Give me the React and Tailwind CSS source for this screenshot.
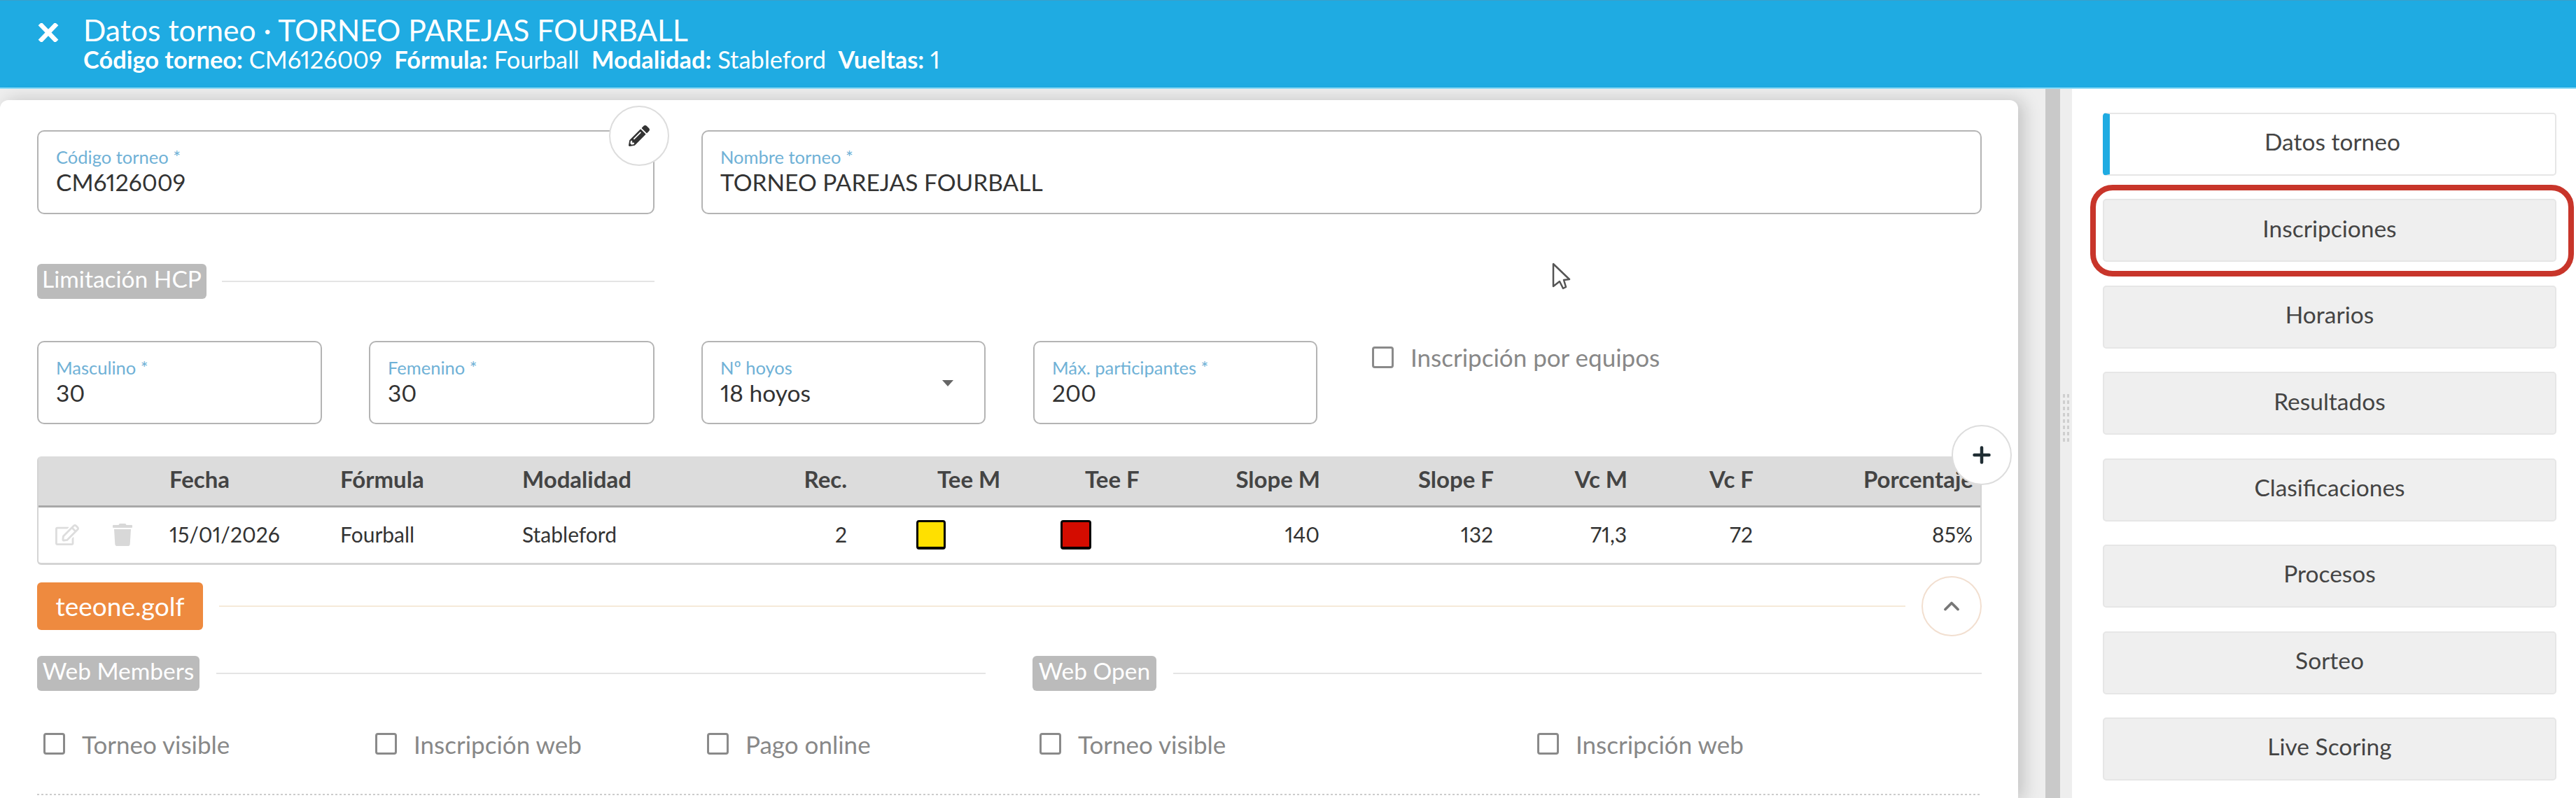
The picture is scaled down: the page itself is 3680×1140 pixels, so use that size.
import React from 'react';
import { Plus, ChevronUp } from 'lucide-react';
import { FaPencilAlt, FaRegEdit, FaTrash } from 'react-icons/fa';

const font = "font-['Lato','Liberation_Sans',sans-serif]";

// Floating-label box used by every form field
const Field = ({ label, value, className, arrow }) => (
  <div className={`relative h-full rounded-[10px] border-2 border-[#b4b4b4] bg-white pl-[25px] pt-[22px] ${className || ''}`}>
    <div className="text-[25.5px] leading-[28px] text-[#6fb1d6]">{label}</div>
    <div className="mt-[1px] text-[33.5px] leading-[42px] text-[#333]">{value}</div>
    {arrow && (
      <svg className="absolute right-[42px] top-[54px]" width="20" height="10" viewBox="0 0 20 10">
        <path d="M2 0 L18 0 L10 9 Z" fill="#666" />
      </svg>
    )}
  </div>
);

const Badge = ({ children, className }) => (
  <div className={`flex h-[50px] shrink-0 items-center justify-center rounded-[6px] bg-[#bbbbbb] pb-[7px] text-[33.5px] text-white ${className || ''}`}>
    {children}
  </div>
);

const Check = ({ label, className }) => (
  <label className={`flex items-center ${className || ''}`}>
    <span className="h-[31px] w-[31px] rounded-[4px] border-[3px] border-[#8a8a8a] bg-white"></span>
    <span className="ml-[24px] text-[35px] leading-[40px] text-[#888]">{label}</span>
  </label>
);

const RoundButton = ({ children, className }) => (
  <div className={`flex h-[86px] w-[86px] items-center justify-center rounded-full border-2 bg-white ${className || ''}`}>
    {children}
  </div>
);

const menu = ['Datos torneo', 'Inscripciones', 'Horarios', 'Resultados', 'Clasificaciones', 'Procesos', 'Sorteo', 'Live Scoring'];

const columns = [
  ['Fecha', 'w-[244px] text-left', '15/01/2026'],
  ['Fórmula', 'w-[260px] text-left', 'Fourball'],
  ['Modalidad', 'w-[300px] text-left', 'Stableford'],
  ['Rec.', 'w-[164px] text-right', '2'],
];

const rightColumns = [
  ['Slope M', 'w-[258px]', '140'],
  ['Slope F', 'w-[248px]', '132'],
  ['Vc M', 'w-[191px]', '71,3'],
  ['Vc F', 'w-[180px]', '72'],
  ['Porcentaje', 'w-[314px]', '85%'],
];

export default function App() {
  return (
    <div className={`h-[1140px] w-[3680px] overflow-hidden bg-[#eeeeee] proportional-nums ${font}`}>
      <header className="flex h-[127px] items-start border-b-2 border-t border-b-[#8fdcf7] border-t-[#3a9fc9] bg-[#1fabe2] text-white">
        <svg className="ml-[54px] mt-[32px] shrink-0" width="30" height="27" viewBox="0 0 30 27">
          <path d="M3 1 L27 26 M27 1 L3 26" stroke="#ffffff" strokeWidth="6.5" fill="none" />
        </svg>
        <div className="ml-[35px] pt-[19px]">
          <div className="text-[42.6px] leading-[46px]">Datos torneo · TORNEO PAREJAS FOURBALL</div>
          <div className="text-[34.4px] leading-[38px]">
            <b>Código torneo:</b> CM6126009 &nbsp;<b>Fórmula:</b> Fourball &nbsp;<b>Modalidad:</b> Stableford &nbsp;<b>Vueltas:</b> 1
          </div>
        </div>
      </header>

      <div className="flex h-[1013px]">
        {/* left content */}
        <div className="w-[2922px] shrink-0 pt-[16px]">
          <main className="relative h-[1000px] w-[2883px] rounded-tr-[12px] rounded-tl-[12px] bg-white pl-[53px] pr-[52px] pt-[43px] shadow-[8px_0_24px_rgba(0,0,0,0.18)]">
            <div className="flex h-[120px] gap-[67px]">
              <Field className="w-[882px]" label="Código torneo *" value="CM6126009" />
              <Field className="flex-1" label="Nombre torneo *" value="TORNEO PAREJAS FOURBALL" />
            </div>
            <RoundButton className="absolute left-[870px] top-[8px] border-[#dddddd]">
              <FaPencilAlt size={30} color="#333" />
            </RoundButton>

            <div className="mt-[71px] flex w-[882px] items-center">
              <Badge className="w-[242px]">Limitación HCP</Badge>
              <div className="ml-[22px] h-[2px] flex-1 bg-[#e4e4e4]"></div>
            </div>

            <div className="mt-[60px] flex h-[119px]">
              <Field className="w-[407px]" label="Masculino *" value="30" />
              <Field className="ml-[67px] w-[408px]" label="Femenino *" value="30" />
              <Field className="ml-[67px] w-[406px]" label="Nº hoyos" value="18 hoyos" arrow />
              <Field className="ml-[68px] w-[406px]" label="Máx. participantes *" value="200" />
              <Check className="ml-[78px] h-[46px]" label="Inscripción por equipos" />
            </div>

            {/* tees table */}
            <div className="mt-[46px] w-[2778px] overflow-hidden rounded-[6px] border-x-2 border-b-[3px] border-[#d4d4d4] text-[30px] text-[#333]">
              <div className="flex h-[73px] items-center border-b-[3px] border-[#a8a8a8] bg-[#dcdcdc] pb-[4px] text-[33px] font-bold text-[#444]">
                <div className="w-[187px]"></div>
                {columns.map(([name, cls]) => <div key={name} className={cls}>{name}</div>)}
                <div className="ml-[129px] w-[86px] whitespace-nowrap">Tee M</div>
                <div className="ml-[125px] w-[78px] whitespace-nowrap">Tee F</div>
                {rightColumns.map(([name, cls]) => <div key={name} className={`${cls} text-right`}>{name}</div>)}
              </div>
              <div className="flex h-[79px] items-center pb-[2px]">
                <div className="flex w-[187px] items-center pl-[24px]">
                  <FaRegEdit size={34} color="#dddddd" />
                  <FaTrash className="ml-[46px]" size={32} color="#d8d8d8" />
                </div>
                {columns.map(([name, cls, val]) => <div key={name} className={cls}>{val}</div>)}
                <div className="ml-[99px] h-[42px] w-[42px] rounded-[4px] border-[3px] border-b-[4px] border-black bg-[#ffe000]"></div>
                <div className="ml-[164px] h-[42px] w-[44px] rounded-[4px] border-[3px] border-b-[4px] border-black bg-[#d40c00]"></div>
                {rightColumns.map(([name, cls, val], i) => (
                  <div key={name} className={`${cls} text-right ${i === 0 ? 'ml-[68px]' : ''}`}>{val}</div>
                ))}
              </div>
            </div>
            <RoundButton className="absolute left-[2788px] top-[464px] border-[#dddddd]">
              <Plus size={36} stroke="#1f2d33" strokeWidth={3} />
            </RoundButton>

            <div className="mt-[25px] flex h-[68px] w-[2778px] items-center">
              <div className="flex h-[68px] w-[237px] shrink-0 items-center justify-center rounded-[6px] bg-[#ee8a3f] text-[37px] text-white">teeone.golf</div>
              <div className="ml-[23px] h-[2px] w-[2410px] bg-[#f5ead9]"></div>
              <RoundButton className="ml-[23px] shrink-0 border-[#f2dfd0]">
                <ChevronUp size={36} stroke="#777" strokeWidth={2.5} />
              </RoundButton>
            </div>

            <div className="mt-[37px] flex w-[2778px]">
              <div className="flex w-[1355px] items-center">
                <Badge className="w-[232px]">Web Members</Badge>
                <div className="ml-[24px] h-[2px] flex-1 bg-[#e4e4e4]"></div>
              </div>
              <div className="ml-[67px] flex flex-1 items-center">
                <Badge className="w-[177px]">Web Open</Badge>
                <div className="ml-[24px] h-[2px] flex-1 bg-[#e4e4e4]"></div>
              </div>
            </div>

            <div className="ml-[9px] mt-[60px] flex h-[31px] items-center">
              <Check className="w-[474px]" label="Torneo visible" />
              <Check className="w-[474px]" label="Inscripción web" />
              <Check className="w-[475px]" label="Pago online" />
              <Check className="w-[711px]" label="Torneo visible" />
              <Check label="Inscripción web" />
            </div>

            <div className="mt-[56px] h-[2px] w-[2778px] bg-[repeating-linear-gradient(90deg,#cccccc_0_3px,transparent_3px_6px)]"></div>

            {/* mouse pointer caught in the screenshot */}
            <svg className="absolute left-[2216px] top-[231px]" width="30" height="42" viewBox="0 0 30 42">
              <path d="M3 3 L3 35 L12 28 L17 38 L21 36 L18 26 L26 25 Z" fill="#ffffff" stroke="#555555" strokeWidth="2.5" strokeLinejoin="round" />
            </svg>
          </main>
        </div>

        {/* splitter */}
        <div className="h-full w-[21px] shrink-0 bg-[#c9c9c9]"></div>
        <div className="flex h-full w-[17px] shrink-0 items-center justify-center bg-[#eeeeee]">
          <div className="mb-[74px] grid grid-cols-2 gap-x-[3px] gap-y-[4px]">
            {Array.from({ length: 16 }).map((_, i) => <span key={i} className="h-[5px] w-[3px] bg-[#cfcfcf]"></span>)}
          </div>
        </div>

        {/* right menu */}
        <aside className="relative flex-1 bg-white pl-[44px] pt-[34px]">
          <div className="flex w-[648px] flex-col gap-[33.43px]">
            {menu.map((item, i) => (
              <div
                key={item}
                className={`flex h-[90px] items-center justify-center rounded-[5px] border-2 pb-[7px] text-[33.5px] text-[#444] ${i === 0 ? 'border-[#e6e6e6] border-l-[10px] border-l-[#1fabe2] bg-white' : 'border-[#e6e6e6] bg-[#efefef]'}`}
              >
                {item}
              </div>
            ))}
          </div>
          <div className="absolute left-[26px] top-[137px] h-[131px] w-[691px] rounded-[32px] border-[8px] border-[#c8352a]"></div>
        </aside>
      </div>
    </div>
  );
}
